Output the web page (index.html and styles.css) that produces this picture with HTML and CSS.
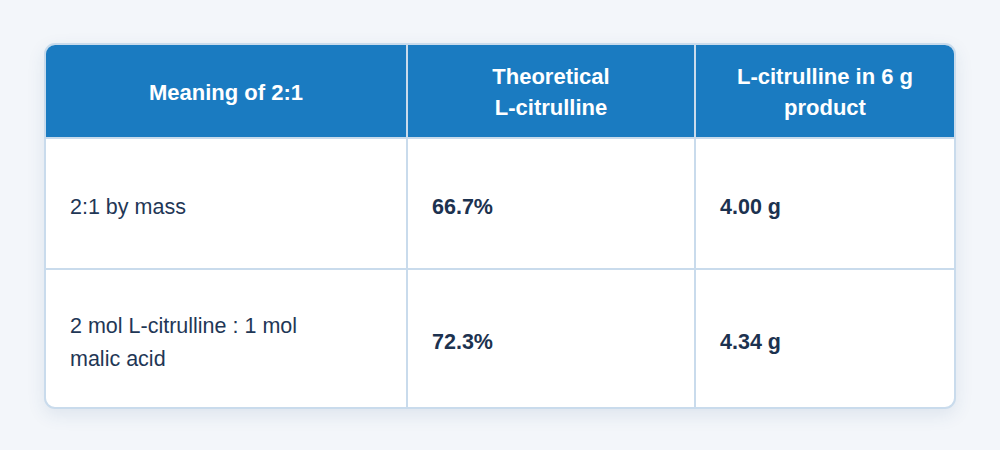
FILE: index.html
```html
<!DOCTYPE html>
<html lang="en">
<head>
<meta charset="utf-8">
<title>L-citrulline malate ratio</title>
<link rel="stylesheet" href="styles.css">
</head>
<body>
<main class="page">
  <div class="card">
    <table class="data">
      <colgroup>
        <col class="c1">
        <col class="c2">
        <col class="c3">
      </colgroup>
      <thead>
        <tr class="head-row">
          <th>Meaning of 2:1</th>
          <th class="narrow">Theoretical L-citrulline</th>
          <th>L-citrulline in 6 g product</th>
        </tr>
      </thead>
      <tbody>
        <tr class="row-a">
          <td>2:1 by mass</td>
          <td class="num">66.7%</td>
          <td class="num">4.00 g</td>
        </tr>
        <tr class="row-b">
          <td>2 mol L-citrulline : 1 mol malic acid</td>
          <td class="num">72.3%</td>
          <td class="num">4.34 g</td>
        </tr>
      </tbody>
    </table>
  </div>
</main>
</body>
</html>
```
FILE: styles.css
```css
html, body {
  margin: 0;
  padding: 0;
  background: #f3f6fa;
}
body {
  font-family: "Liberation Sans", Arial, Helvetica, sans-serif;
  color: #1f3756;
}
.page {
  padding: 43px 44px;
}
.card {
  width: 912px;
  box-sizing: border-box;
  border: 2px solid #c9dbec;
  border-radius: 11px;
  overflow: hidden;
  background: #ffffff;
  box-shadow: 0 6px 18px rgba(40, 80, 130, 0.10);
}
.data {
  width: 100%;
  border-collapse: collapse;
  table-layout: fixed;
}
.c1 { width: 361px; }
.c2 { width: 288px; }
.c3 { width: auto; }
.data th {
  background: #1a7bc1;
  color: #ffffff;
  font-weight: bold;
  font-size: 22px;
  line-height: 31px;
  text-align: center;
  padding: 2px 38px 0;
  border-right: 2px solid #c9dbec;
  border-bottom: 2px solid #c9dbec;
  box-sizing: border-box;
}
.data th.narrow {
  padding-left: 78px;
  padding-right: 78px;
}
.head-row { height: 93px; }
.row-a { height: 131px; }
.row-b { height: 138px; }
.data td {
  font-size: 21.5px;
  line-height: 33px;
  padding: 8px 64px 0 24px;
  vertical-align: middle;
  border-right: 2px solid #c9dbec;
  border-bottom: 2px solid #c9dbec;
}
.data th:last-child,
.data td:last-child { border-right: none; }
.data tbody tr:last-child td { border-bottom: none; }
.data td.num {
  font-weight: bold;
  color: #1c324f;
}
```
